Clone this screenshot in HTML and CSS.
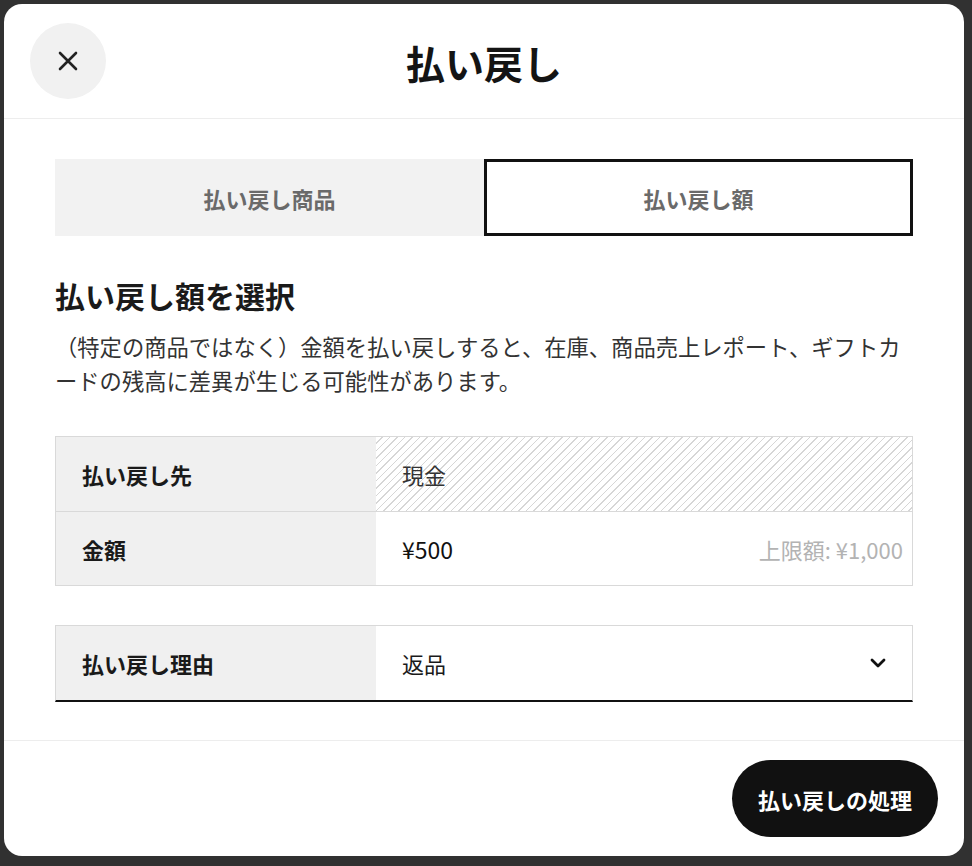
FILE: index.html
```html
<!DOCTYPE html>
<html lang="ja">
<head>
<meta charset="utf-8">
<title>払い戻し</title>
<link rel="stylesheet" href="styles.css">
</head>
<body>
<div class="modal">
  <header class="modal-header">
    <button class="close-btn" aria-label="閉じる">
      <svg width="22" height="22" viewBox="0 0 22 22"><path d="M3 3 L19 19 M19 3 L3 19" stroke="#222" stroke-width="2.6" stroke-linecap="round" fill="none"/></svg>
    </button>
    <h1 class="title">払い戻し</h1>
  </header>
  <main class="modal-body">
    <div class="tabs">
      <div class="tab">払い戻し商品</div>
      <div class="tab tab-active">払い戻し額</div>
    </div>
    <h2 class="heading">払い戻し額を選択</h2>
    <p class="desc">（特定の商品ではなく）金額を払い戻しすると、在庫、商品売上レポート、ギフトカードの残高に差異が生じる可能性があります。</p>
    <div class="fields">
      <div class="row">
        <div class="label">払い戻し先</div>
        <div class="value value-disabled">現金</div>
      </div>
      <div class="row">
        <div class="label">金額</div>
        <div class="value value-amount"><span class="amount">¥500</span><span class="limit">上限額: ¥1,000</span></div>
      </div>
    </div>
    <div class="fields fields-select">
      <div class="row">
        <div class="label">払い戻し理由</div>
        <div class="value value-select"><span>返品</span>
          <svg width="16" height="12" viewBox="0 0 16 12"><path d="M2 3 L8 9 L14 3" stroke="#111" stroke-width="2.8" fill="none" stroke-linecap="round" stroke-linejoin="round"/></svg>
        </div>
      </div>
    </div>
  </main>
  <footer class="modal-footer">
    <button class="primary-btn">払い戻しの処理</button>
  </footer>
</div>
</body>
</html>
```

FILE: styles.css
```css
* { box-sizing: border-box; }
html, body {
  margin: 0;
  padding: 0;
}
body {
  background: #313131;
  padding: 4px 8px 10px 4px;
  font-family: "Noto Sans CJK JP", "Noto Sans", sans-serif;
  color: #1a1a1a;
}
.modal {
  width: 960px;
  height: 852px;
  background: #fff;
  border-radius: 18px;
  display: flex;
  flex-direction: column;
  overflow: hidden;
}
.modal-header {
  height: 115px;
  border-bottom: 1px solid #ededed;
  position: relative;
  display: flex;
  align-items: center;
  justify-content: center;
}
.close-btn {
  position: absolute;
  left: 26px;
  top: 19px;
  width: 76px;
  height: 76px;
  border-radius: 50%;
  border: none;
  background: #f1f1f1;
  display: flex;
  align-items: center;
  justify-content: center;
  padding: 0;
}
.title {
  margin: 0;
  font-size: 39px;
  font-weight: 700;
  color: #141414;
  line-height: 1;
  padding-top: 2px;
}
.modal-body {
  padding: 40px 51px 38px;
  flex: 1;
}
.tabs {
  display: grid;
  grid-template-columns: 1fr 1fr;
  height: 77px;
}
.tab {
  display: flex;
  align-items: center;
  justify-content: center;
  background: #f2f2f2;
  color: #6a6a6a;
  font-size: 22px;
  font-weight: 700;
}
.tab-active {
  background: #fff;
  border: 3px solid #111;
}
.heading {
  margin: 40px 0 0;
  font-size: 30px;
  line-height: 39px;
  font-weight: 700;
  color: #1a1a1a;
}
.desc {
  margin: 14px 0 0;
  font-size: 22.3px;
  line-height: 34px;
  color: #333;
}
.fields {
  margin-top: 39px;
  border: 1px solid #d9d9d9;
}
.row {
  display: grid;
  grid-template-columns: 320px 1fr;
  height: 74px;
}
.row + .row {
  border-top: 1px solid #d9d9d9;
}
.label {
  background: #f0f0f0;
  display: flex;
  align-items: center;
  padding-left: 26px;
  font-size: 22px;
  font-weight: 700;
  color: #1a1a1a;
}
.value {
  display: flex;
  align-items: center;
  padding: 0 9px 0 26px;
  font-size: 22px;
  color: #1a1a1a;
}
.value-disabled {
  background: repeating-linear-gradient(135deg, #fff 0, #fff 4.2px, #d6d6d6 4.2px, #d6d6d6 5.3px);
  color: #333;
}
.value-amount {
  justify-content: space-between;
}
.amount {
  color: #111;
  font-size: 23px;
}
.limit {
  color: #b3b3b3;
  font-size: 22px;
}
.fields-select {
  border-bottom: 2px solid #111;
}
.value-select {
  justify-content: space-between;
  padding-right: 26px;
}
.modal-footer {
  border-top: 1px solid #ededed;
  padding: 19px 26px;
  display: flex;
  justify-content: flex-end;
}
.primary-btn {
  height: 77px;
  padding: 0 26px;
  border: none;
  border-radius: 39px;
  background: #111;
  color: #fff;
  font-family: "Noto Sans CJK JP", "Noto Sans", sans-serif;
  font-size: 22px;
  font-weight: 700;
}
```
